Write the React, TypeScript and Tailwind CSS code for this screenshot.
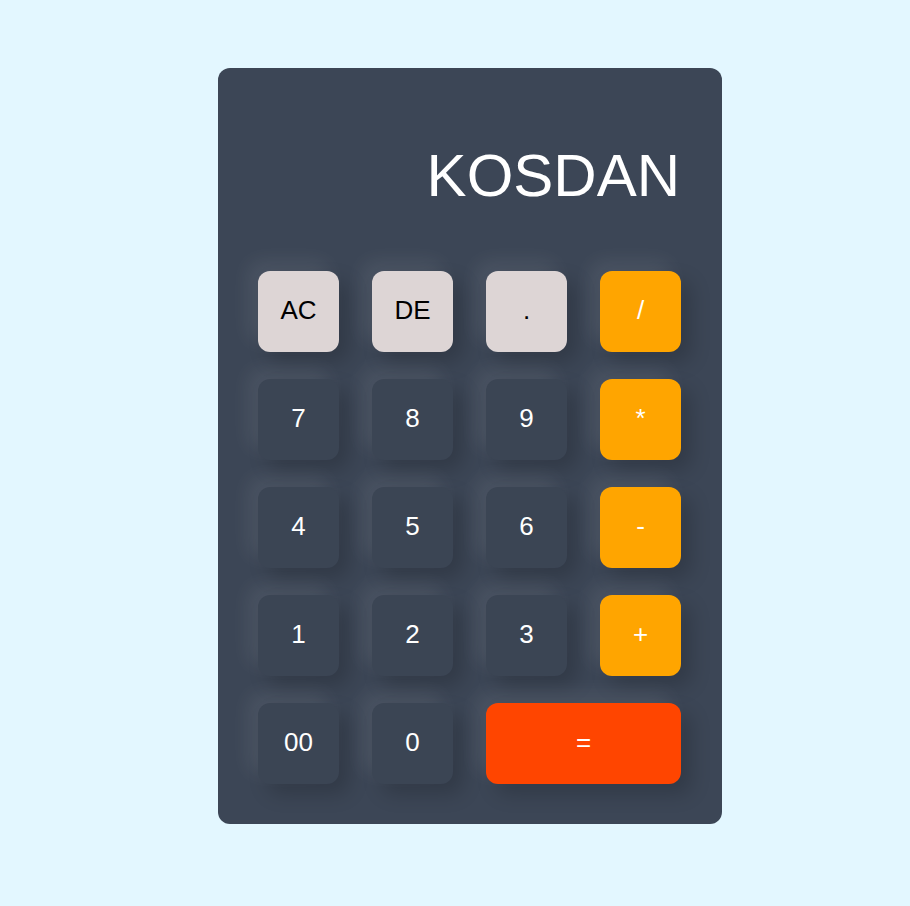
const keys: { label: string; kind: "light" | "dark" | "op" | "eq" }[] = [
  { label: "AC", kind: "light" },
  { label: "DE", kind: "light" },
  { label: ".", kind: "light" },
  { label: "/", kind: "op" },
  { label: "7", kind: "dark" },
  { label: "8", kind: "dark" },
  { label: "9", kind: "dark" },
  { label: "*", kind: "op" },
  { label: "4", kind: "dark" },
  { label: "5", kind: "dark" },
  { label: "6", kind: "dark" },
  { label: "-", kind: "op" },
  { label: "1", kind: "dark" },
  { label: "2", kind: "dark" },
  { label: "3", kind: "dark" },
  { label: "+", kind: "op" },
  { label: "00", kind: "dark" },
  { label: "0", kind: "dark" },
  { label: "=", kind: "eq" },
];

const kindClass = {
  light: "bg-[#ddd5d5] text-black",
  dark: "bg-[#3b4554] text-white",
  op: "bg-[#ffa500] text-white",
  eq: "bg-[#ff4500] text-white col-span-2",
};

export default function App() {
  return (
    <div className="min-h-[906px] w-full bg-[#e3f7ff] pt-[68px] pl-[218px] font-['Liberation_Sans',Arial,sans-serif]">
      <div className="w-[504px] rounded-[12px] bg-[#3c4656] px-10 pt-10 pb-10">
        <div className="flex h-[135px] items-center justify-end pr-[2px] text-[60px] leading-none text-white">
          KOSDAN
        </div>
        <div className="mt-[28px] grid grid-cols-[81px_81px_81px_81px] gap-x-[33px] gap-y-[27px]">
          {keys.map((k) => (
            <button
              key={k.label}
              className={`flex h-[81px] items-center justify-center rounded-[12px] pb-[4px] text-[26px] leading-none shadow-[-10px_-10px_20px_rgba(255,255,255,0.08),10px_10px_20px_rgba(0,0,0,0.18)] ${kindClass[k.kind]}`}
            >
              {k.label}
            </button>
          ))}
        </div>
      </div>
    </div>
  );
}
